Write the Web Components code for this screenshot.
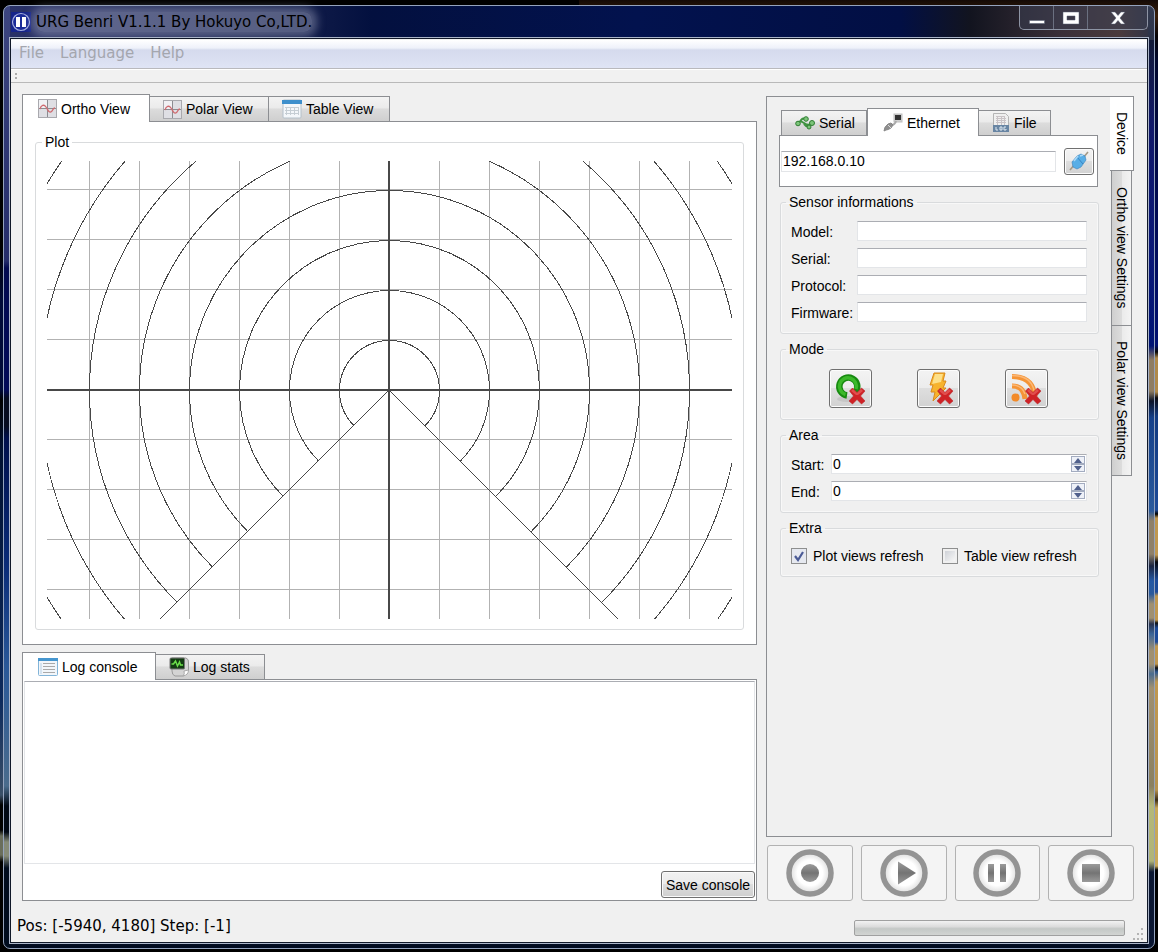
<!DOCTYPE html>
<html lang="en">
<head>
<meta charset="utf-8">
<title>URG Benri</title>
<style>
html,body{margin:0;padding:0}
body{
  min-height:100vh;display:flex;font:14px/18px "Liberation Sans",Arial,sans-serif;color:#000;
  background:
    linear-gradient(180deg,#000 0,#000 250px,#000a38 300px,#000a38 390px,#000 400px,#001030 450px,#0d2a5c 700px,#3a5068 795px,#000 805px,#000 830px,#6a6e5c 836px,#6a6e5c 855px,#000 862px) left/50% 100% no-repeat,
    linear-gradient(180deg,#140a06 0,#3a1f08 16px,#060304 36px,#00072c 60px,#000a50 200px,#001070 345px,#060606 352px,#b08a4a 358px,#b08a4a 392px,#0a0a10 398px,#123a80 416px,#1c4a98 510px,#000 514px,#c09850 518px,#c09850 555px,#05060c 562px,#1c4a98 580px,#1c4a98 592px,#c09850 596px,#c09850 620px,#111 623px,#1c4a98 628px,#1c4a98 642px,#c09850 646px,#c09850 664px,#111 668px,#2a5690 672px,#c09850 682px,#b89450 790px,#3a2c14 800px,#c8a858 808px,#c8a858 866px,#000 870px) right/50% 100% no-repeat;
}
</style>
</head>
<body>
<benri-window caption="URG Benri V1.1.1 By Hokuyo Co,LTD.">
  <benri-menu slot="menu"></benri-menu>
  <benri-main slot="main"></benri-main>
  <benri-status slot="status"></benri-status>
</benri-window>

<script>
const BASE = `<style>
:host,*{box-sizing:border-box}
button,input,textarea{font:inherit;color:inherit;margin:0;padding:0;outline:none}
svg{display:block}
</style>`;

function define(name, html, setup) {
  const tpl = document.createElement('template');
  tpl.innerHTML = BASE + html;
  customElements.define(name, class extends HTMLElement {
    constructor() {
      super();
      this.attachShadow({ mode: 'open' }).append(tpl.content.cloneNode(true));
    }
    connectedCallback() { if (setup && !this.ready) { this.ready = true; setup(this, this.shadowRoot); } }
  });
}

const CROSS = `<path d="M17.500 20l3-3 4.500 4.500 4.500-4.500 3.500 3-4.500 5 4.500 5-3.500 3-4.500-4.500-4.500 4.500-3.500-3 4.500-5z" fill="#cf2226" stroke="#b8262a" stroke-width=".6"/><path d="M19 20l2-2 4 4 4-4 2 2-5 4h-2z" fill="#e8605c" opacity=".7"/>`;
const RING = `<circle cx="24" cy="24" r="21" fill="url(#w)" stroke="#949494" stroke-width="5.500"/>`;
const RDEF = `<defs><radialGradient id="w"><stop offset=".6" stop-color="#fff"/><stop offset="1" stop-color="#d8d8d8"/></radialGradient><linearGradient id="g" x2="0" y2="1"><stop offset="0" stop-color="#9c9c9c"/><stop offset=".5" stop-color="#747474"/><stop offset="1" stop-color="#9a9a9a"/></linearGradient></defs>`;
const ICONS = {
  app: [20, 20, `<rect width="20" height="20" fill="#16248a"/><circle cx="10" cy="10" r="8.500" fill="#1a2a98" stroke="#a6b0e0" stroke-width="1.200"/><path d="M5 5h4v10H5zM11 5h4v10h-4z" fill="#fff"/>`],
  plot: [19, 19, `<rect x=".5" y=".5" width="18" height="18" fill="#dfdfe4" stroke="#a9a9ae"/><path d="M1 1h8v8H1z" fill="#f1f1f4"/><path d="M9.500 1v17M1 9.500h17" stroke="#8c8c91"/><path d="M2 10c1-4 4-5 6-2s3 7 6 4c1-1 1-3 3-3" fill="none" stroke="#cf6a70" stroke-width="1.300"/>`],
  table: [20, 20, `<rect x="1" y="1" width="18" height="18" rx="1" fill="#f4f7fa" stroke="#b4c0ca"/><path d="M0 1h20v4H0z" fill="#3d8fcc"/><path d="M3 8.500h14M3 11.500h14M3 14.500h14M4.500 8v8M8.500 8v8M12.500 8v8M16.500 8v8" stroke="#c6ced4"/>`],
  log: [20, 18, `<rect x=".5" y=".5" width="19" height="17" rx="1" fill="#f2f6fa" stroke="#82b4d8"/><path d="M0 0h20v3H0z" fill="#4596cf"/><path d="M5 5.500h12M5 8.500h12M5 11.500h12M5 14.500h12" stroke="#a9a9a9"/><path d="M3 5v11" stroke="#b8d0e4"/>`],
  stats: [20, 20, `<path d="M3 1h14q3 1 2.500 5v7l-5 6H6q-3-1-3-5z" fill="#d4d4d4" stroke="#9a9a9a"/><path d="M14 19q2-2 1-5l4.500-1q0 5-5.500 6z" fill="#fff" stroke="#aaa"/><rect x="1" y="1" width="14.500" height="11" rx="1" fill="#123c12" stroke="#777"/><path d="M2.500 7h2l2-3 2 5 2-4 1 3h2.500" fill="none" stroke="#6be04a" stroke-width="1.500"/>`],
  serial: [20, 14, `<g fill="none" stroke="#3f9440" stroke-width="2"><path d="M2 7Q5 4 9 7t8 1"/><path d="M5 6Q7 1 11 3"/><path d="M9 8q2 3 5 2"/></g><g fill="#7cc47a" stroke="#2f7d32"><circle cx="3" cy="7.500" r="2.300"/><circle cx="11" cy="3" r="2.300"/><circle cx="17" cy="7" r="2.500"/><circle cx="14" cy="11" r="2"/></g>`],
  ether: [20, 20, `<rect x="11" y="1" width="8" height="8" fill="#cfcfcf" stroke="#c0c0c0"/><path d="M12 2h6v5h-6z" fill="#333"/><path d="M13 8Q12 12 8 12" fill="none" stroke="#aaa" stroke-width="2"/><path d="M1 18q0-4 4-7l3-1 2 2-2 3q-3 2-5 2z" fill="#8f8f8f" stroke="#888"/><path d="M5 12l3 3" stroke="#ddd"/>`],
  file: [18, 20, `<path d="M1.500.500h12l3 3v15h-15z" fill="#efefef" stroke="#b5b5b5"/><path d="M4 3.500h9M4 5.500h10M4 7.500h10M4 9.500h10M5.500 3v9M9.500 3v9M12.500 3v9" stroke="#c9c3c6"/><path d="M1 12h16v7H1z" fill="#6885a3"/><path d="M4 14v3h2M8 14h2v3H8zM14 14h-2v3h2v-1" stroke="#dfe8f0" fill="none"/>`],
  plug: [20, 20, `<path d="M1 19l5-6M14 7l5-6" stroke="#a59a86" stroke-width="1.600"/><path d="M3 11l5-6 4-2 4 2 1 4-5 7-4 2-4-2z" fill="#58aee6" stroke="#3c82bb" stroke-width=".6"/><path d="M8 6l6 7" stroke="#3a84c0" stroke-width="1"/><path d="M5 10l4-5M11 5l3-1" stroke="#aad8f6" stroke-width="1.500"/>`],
  loop: [36, 36, `<ellipse cx="15" cy="28" rx="10" ry="3" fill="#bbb" opacity=".6"/><path d="M15 24.500A9 9 0 1 1 23.500 21" fill="none" stroke="#178a10" stroke-width="6.500"/><path d="M13.500 23.500A8.500 8.500 0 1 1 24 18" fill="none" stroke="#3bb82a" stroke-width="3.500"/>` + CROSS],
  bolt: [36, 36, `<path d="M14 2h11l-2 8h3l-3 7h3L13 30l2-9h-4l2-7h-3z" fill="#f7b32e" stroke="#d98a1c"/><path d="M15 3h8l-2 8-9 2z" fill="#fde08a"/>` + CROSS],
  feed: [36, 36, `<g fill="none" stroke="#f59436" stroke-width="5"><path d="M4 15q12 0 13 13"/><path d="M4 5.500q21 0 23 20"/></g><path d="M4 4.500q19 0 22 15M4 14q10 0 13 9" fill="none" stroke="#fbb877" stroke-width="1.500"/><circle cx="7.500" cy="26.500" r="4" fill="#f28a28"/>` + CROSS],
  record: [48, 48, RDEF + RING + `<circle cx="24" cy="24" r="9" fill="url(#g)"/>`],
  play: [48, 48, RDEF + RING + `<path d="M18 12.500v23L36 24z" fill="url(#g)"/>`],
  pause: [48, 48, RDEF + RING + `<path d="M15 15h6v18h-6zM27 15h6v18h-6z" fill="url(#g)"/>`],
  stop: [48, 48, RDEF + RING + `<path d="M15 15h18v18H15z" fill="url(#g)"/>`],
  min: [16, 14, `<path d="M.500 9.500h15v3H.500z" fill="#fff" stroke="#555c70" stroke-width=".5"/>`],
  max: [18, 14, `<path fill-rule="evenodd" d="M1 1h16v12H1zM5 5v4h8V5z" fill="#fff" stroke="#555c70" stroke-width=".5"/>`],
  close: [16, 14, `<path d="M1 1h4l3 3.500L11 1h4L10 7l5 6h-4L8 9.500 5 13H1l5-6z" fill="#fff" stroke="#555c70" stroke-width=".5"/>`],
  up: [8, 5, `<path d="M4 0l4 5H0z" fill="#50608c"/>`],
  down: [8, 5, `<path d="M4 5l4-5H0z" fill="#50608c"/>`]
};

define('benri-icon', `<style>:host{display:block;flex:none}</style>`, (el, root) => {
  const [w, h, body] = ICONS[el.getAttribute('name')];
  root.append(document.createRange().createContextualFragment(
    `<svg width="${w}" height="${h}" viewBox="0 0 ${w} ${h}" aria-hidden="true">${body}</svg>`));
});

define('benri-window', `<style>
:host{display:flex;flex:1;min-width:0;margin:5px 3px 3px 3px}
.frame{flex:1;min-width:0;display:flex;flex-direction:column;border:1px solid #94a3bd;border-radius:7px;padding:0 6px 5px;
 background:
 linear-gradient(180deg,#333b50 0,#2c3348 34px,transparent 34px) right/6px 100% no-repeat,
 linear-gradient(180deg,#3d4680 0,#252d6a 255px,#020a50 262px,#020a58 384px,#060c20 392px,#060c20 420px,#00104c 432px,#0a2c78 560px,#2a5898 660px,#4a6c8c 780px,#000814 800px,#000814 826px,#868b78 836px,#868b78 850px,#000c1e 862px) left/6px 100% no-repeat,
 linear-gradient(180deg,transparent 34px,#121a38 34px,#10186a 120px,#0a1878 250px,#001474 340px,#8f7d62 354px,#8f7d62 385px,#0c1428 395px,#15408a 412px,#2a5a9c 505px,#8f8068 515px,#8f8068 548px,#1a2440 560px,#2458a4 575px,#2a5a9c 588px,#a09070 598px,#a09070 612px,#2a3450 618px,#3a6498 628px,#a09070 645px,#a09070 658px,#4a6c90 668px,#a09070 682px,#8a8060 780px,#b4b878 800px,#b0b478 855px,#0a1632 866px) right/6px 100% no-repeat,
 linear-gradient(90deg,#2a3268 0,#1a2450 22%,#03103f 32%,#02124e 55%,#020f44 78%,#12141f 84%,#3a2f38 92%,#4a3a3c 97%,#2e3448 100%) top/100% 34px no-repeat,
 #010b20}
header{display:flex;align-items:flex-start;height:32px;flex:none}
.cap{display:flex;align-items:center;gap:5px;height:31px;padding-left:1px;flex:1}
h1{margin:0;font:15px/20px "DejaVu Sans",Verdana,sans-serif;color:#000;background:rgba(150,156,184,.5);box-shadow:0 0 8px 5px rgba(150,156,184,.5);border-radius:8px;white-space:nowrap}
.btns{display:flex;border:1px solid #8d94a4;border-top:0;border-radius:0 0 5px 5px;height:24px;flex:none;background:rgba(60,66,86,.5)}
.btns button{border:0;background:none;display:flex;align-items:center;justify-content:center;width:34px;border-right:1px solid #6b7080}
.btns button:last-child{width:59px;border-right:0}
.client{flex:1;min-height:0;display:flex;flex-direction:column;border:1px solid #101828;background:#f0f0f0;outline:1px solid #aab4c8;padding:1px 0 0}
slot[name=main]::slotted(*){flex:1}
</style>
<div class="frame"><header><div class="cap"><benri-icon name="app"></benri-icon><h1></h1></div>
<div class="btns"><button aria-label="Minimize"><benri-icon name="min"></benri-icon></button><button aria-label="Maximize"><benri-icon name="max"></benri-icon></button><button aria-label="Close"><benri-icon name="close"></benri-icon></button></div></header>
<div class="client"><slot name="menu"></slot><slot name="main"></slot><slot name="status"></slot></div></div>`,
(el, root) => { root.querySelector('h1').textContent = el.getAttribute('caption'); });

define('benri-menu', `<style>
:host{display:block;font:15px/20px "DejaVu Sans",Verdana,sans-serif}
nav{display:flex;gap:16px;height:29px;padding:3px 8px 0;border-bottom:1px solid #b9b9bd;background:linear-gradient(#fff 0,#eef1fa 8px,#d5daed 10px,#dfe4f5 100%)}
button{border:0;background:none;color:#a4a6ae;height:20px;line-height:20px}
.bar{height:14px;border-top:1px solid #fff;border-bottom:1px solid #b9b9b9;background:#f1f1f1;display:flex;align-items:center;padding-left:4px}
.bar i{width:2px;height:6px;border:solid #aaa;border-width:2px 0}
</style><nav><button>File</button><button>Language</button><button>Help</button></nav><div class="bar"><i></i></div>`);

define('benri-tab', `<style>
:host{display:block;flex:none}
button{width:100%;height:25px;display:flex;align-items:center;gap:4px;padding:0 0 0 13px;border:1px solid #8c8e92;border-bottom:0;border-left-width:0;white-space:nowrap;background:linear-gradient(#f3f3f3 0,#ebebeb 45%,#dcdcdc 50%,#cfcfcf 100%)}
:host(:first-child) button{border-left-width:1px}
:host([active]) button{height:28px;margin-bottom:-1px;background:#fff;position:relative;border-left-width:1px;padding-left:15px}
</style><button role="tab"><slot name="icon"></slot><slot></slot></button>`,
(el, root) => root.querySelector('button').setAttribute('aria-selected', el.hasAttribute('active')));

define('benri-group', `<style>
:host{display:flex;min-width:0}
fieldset{flex:1;min-width:0;margin:0;border:1px solid #d9dbdd;border-radius:3px;padding:10px 11px 11px 10px;box-shadow:inset 0 0 0 1px var(--hi,#f8f8f8)}
legend{padding:0 3px;margin-left:-5px;line-height:18px}
:host([fill]) fieldset{display:flex;padding:10px 11px}
</style><fieldset><legend></legend><slot></slot></fieldset>`,
(el, root) => { root.querySelector('legend').textContent = el.getAttribute('title-text'); });

define('benri-plot', `<style>:host{display:block;flex:1;min-width:0;min-height:0}svg{width:100%;height:100%}</style>
<svg viewBox="0 0 685 458" preserveAspectRatio="xMidYMid slice" shape-rendering="crispEdges" fill="none" role="img" aria-label="Plot"></svg>`,
(el, root) => {
  const cx = 342, cy = 229;
  let grid = '', arcs = '';
  for (let i = -6; i <= 6; i++) if (i) grid += `M${cx + i * 50 + .5} 0V458`;
  for (let i = -4; i <= 4; i++) if (i) grid += `M0 ${cy + i * 50 - .5}H685`;
  for (let n = 1; n <= 8; n++) {
    const r = n * 50, d = r * Math.SQRT1_2, x = cx + .5, y = cy + .5;
    arcs += `M${x - d} ${y + d}A${r} ${r} 0 1 1 ${x + d} ${y + d}`;
  }
  root.querySelector('svg').innerHTML =
    `<path d="${grid}" stroke="#000" stroke-opacity=".3"/><path d="${arcs}" stroke="#484848"/>
     <path d="M${cx} ${cy}l240 240M${cx} ${cy}l-240 240" stroke="#484848"/>
     <path d="M${cx} 0V458M0 ${cy}H685" stroke="#484848" stroke-width="2"/>`;
});

define('benri-views', `<style>
:host{display:flex;flex-direction:column;flex:1;min-height:0}
.tabs{display:flex;align-items:flex-end;height:27px}
.pane{flex:1;min-height:0;display:flex;background:#fff;border:1px solid #8c8e92;padding:11px 12px 14px}
benri-group{flex:1;--hi:#fff}
.a{width:128px}.b{width:119px}.c{width:121px}
</style><div class="tabs" role="tablist">
<benri-tab class="a" active><benri-icon slot="icon" name="plot"></benri-icon>Ortho View</benri-tab>
<benri-tab class="b"><benri-icon slot="icon" name="plot"></benri-icon>Polar View</benri-tab>
<benri-tab class="c"><benri-icon slot="icon" name="table"></benri-icon>Table View</benri-tab></div>
<div class="pane"><benri-group title-text="Plot" fill><benri-plot></benri-plot></benri-group></div>`);

define('benri-log', `<style>
:host{display:flex;flex-direction:column;height:249px;flex:none}
.tabs{display:flex;align-items:flex-end;height:27px}
.pane{flex:1;display:flex;flex-direction:column;background:#fff;border:1px solid #8c8e92;padding:1px 1px 2px}
textarea{flex:1;width:100%;resize:none;border:1px solid #e3e5e8;border-top-color:#abadb3;background:#fff}
.save{align-self:flex-end;margin-top:7px;width:94px;height:27px;border:1px solid #707070;border-radius:3px;box-shadow:inset 0 0 0 1px #fafafa;background:linear-gradient(#f2f2f2 0,#ebebeb 48%,#dddddd 50%,#cfcfcf 100%);white-space:nowrap;padding:0 3px}
.a{width:134px}.b{width:109px}
</style><div class="tabs" role="tablist">
<benri-tab class="a" active><benri-icon slot="icon" name="log"></benri-icon>Log console</benri-tab>
<benri-tab class="b"><benri-icon slot="icon" name="stats"></benri-icon>Log stats</benri-tab></div>
<div class="pane"><textarea readonly aria-label="Log console"></textarea><button class="save">Save console</button></div>`);

define('benri-spin', `<style>
:host{display:block}
div{display:flex;align-items:center;height:20px;background:#fff;border:1px solid #e3e5e8;border-top-color:#abadb3;padding:0 1px}
input{flex:1;min-width:0;border:0;background:none;appearance:textfield;height:18px}
input::-webkit-inner-spin-button{display:none}
span{display:flex;flex-direction:column;width:14px;flex:none}
button{height:8px;border:1px solid #a3acc0;background:#eef1f8;display:flex;align-items:center;justify-content:center}
</style><div><input type="number" value="0"><span><button aria-label="Increase" tabindex="-1"><benri-icon name="up"></benri-icon></button><button aria-label="Decrease" tabindex="-1"><benri-icon name="down"></benri-icon></button></span></div>`,
(el, root) => {
  const input = root.querySelector('input'), [up, down] = root.querySelectorAll('button');
  input.setAttribute('aria-label', el.getAttribute('label'));
  up.onclick = () => input.stepUp();
  down.onclick = () => input.stepDown();
});

define('benri-device', `<style>
:host{display:flex;flex-direction:column;flex:1;min-width:0;border:1px solid #8c8e92;padding:11px 12px}
.tabs{display:flex;align-items:flex-end;height:27px;padding-left:2px}
.pane{height:52px;margin-right:1px;display:flex;align-items:center;gap:8px;background:#fff;border:1px solid #8c8e92;padding:0 3px 0 1px}
input.t{min-width:0;height:21px;border:1px solid #e3e5e8;border-top-color:#abadb3;background:#fff;padding:0 1px}
.pane input{flex:1}
.b{border:1px solid #707070;border-radius:3px;box-shadow:inset 0 0 0 1px #fcfcfc;background:linear-gradient(#f3f3f3 0,#ececec 48%,#dedede 50%,#d2d2d2 100%);display:flex;align-items:center;justify-content:center}
.plug{width:30px;height:27px}
.groups{display:flex;flex-direction:column;gap:6px;padding:6px 0 0 1px}
.form{display:grid;grid-template-columns:66px minmax(0,1fr);row-gap:7px}
.form input.t{height:20px}
.form label{height:20px;line-height:22px}
.form.area{grid-template-columns:40px minmax(0,1fr)}
.mode{display:flex;justify-content:center;gap:45px;height:40px;padding:1px 2px 0 0}
.mode .b{width:43px;height:39px}
.extra{display:grid;grid-template-columns:151px minmax(0,1fr)}
.extra label{display:flex;align-items:center;gap:6px;height:18px;white-space:nowrap}
.extra input{appearance:none;width:16px;height:16px;border:1px solid #8e8f8f;background:linear-gradient(135deg,#cfd2d8,#f6f6f6) content-box #f4f4f4;padding:2px;display:grid;flex:none}
.extra input:checked{background:no-repeat center/12px 12px url("data:image/svg+xml,%3Csvg xmlns='http://www.w3.org/2000/svg' viewBox='0 0 12 12'%3E%3Cpath d='M2 6l3 4 5-8' fill='none' stroke='%234b5b96' stroke-width='2.200'/%3E%3C/svg%3E") #e6e9f0}
.x{width:86px}.y{width:112px}.z{width:72px}
</style><div class="tabs" role="tablist">
<benri-tab class="x"><benri-icon slot="icon" name="serial"></benri-icon>Serial</benri-tab>
<benri-tab class="y" active><benri-icon slot="icon" name="ether"></benri-icon>Ethernet</benri-tab>
<benri-tab class="z"><benri-icon slot="icon" name="file"></benri-icon>File</benri-tab></div>
<div class="pane"><input class="t" type="text" value="192.168.0.10" aria-label="IP address"><button class="b plug" aria-label="Connect"><benri-icon name="plug"></benri-icon></button></div>
<div class="groups">
<benri-group title-text="Sensor informations"><div class="form">
<label for="m">Model:</label><input class="t" id="m"><label for="s">Serial:</label><input class="t" id="s"><label for="p">Protocol:</label><input class="t" id="p"><label for="f">Firmware:</label><input class="t" id="f"></div></benri-group>
<benri-group title-text="Mode"><div class="mode"><button class="b" aria-label="Continuous"><benri-icon name="loop"></benri-icon></button><button class="b" aria-label="Intensity"><benri-icon name="bolt"></benri-icon></button><button class="b" aria-label="Multi echo"><benri-icon name="feed"></benri-icon></button></div></benri-group>
<benri-group title-text="Area"><div class="form area"><label>Start:</label><benri-spin label="Start"></benri-spin><label>End:</label><benri-spin label="End"></benri-spin></div></benri-group>
<benri-group title-text="Extra"><div class="extra"><label><input type="checkbox" checked>Plot views refresh</label><label><input type="checkbox">Table view refresh</label></div></benri-group>
</div>`);

define('benri-side', `<style>
:host{display:flex;flex-direction:column;gap:8px;min-width:0;padding-top:2px}
.top{flex:1;display:flex;min-height:0}
.vt{display:flex;flex-direction:column;width:24px;margin-left:-2px;flex:none}
.vt button{writing-mode:vertical-rl;margin-left:2px;width:20px;border:1px solid #8c8e92;border-left:0;border-top:0;white-space:nowrap;background:linear-gradient(90deg,#cfcfcf,#dcdcdc 50%,#ebebeb 55%,#f3f3f3);display:flex;align-items:center;justify-content:center}
.vt .on{margin-left:0;width:24px;height:75px;border-top:1px solid #8c8e92;background:#fff;position:relative}
.o{height:155px}.p{height:150px}
.ctl{display:grid;grid-template-columns:repeat(4,minmax(0,1fr));gap:8px;padding-left:1px}
.ctl button{height:56px;border:1px solid #b2b2b2;border-radius:3px;background:#f4f4f4;display:flex;align-items:center;justify-content:center}
</style><div class="top"><benri-device></benri-device><div class="vt" role="tablist"><button class="on" role="tab">Device</button><button class="o" role="tab">Ortho view Settings</button><button class="p" role="tab">Polar view Settings</button></div></div>
<div class="ctl"><button aria-label="Record"><benri-icon name="record"></benri-icon></button><button aria-label="Play"><benri-icon name="play"></benri-icon></button><button aria-label="Pause"><benri-icon name="pause"></benri-icon></button><button aria-label="Stop"><benri-icon name="stop"></benri-icon></button></div>`);

define('benri-main', `<style>
:host{display:grid;grid-template-columns:minmax(0,1fr) 368px;gap:9px;padding:11px 13px 0 11px;min-height:0}
.left{display:flex;flex-direction:column;gap:7px;min-height:0}
</style><div class="left"><benri-views></benri-views><benri-log></benri-log></div><benri-side></benri-side>`);

define('benri-status', `<style>
:host{display:flex;align-items:center;justify-content:space-between;height:41px;padding:8px 4px 0 6px;font:15px/20px "DejaVu Sans",Verdana,sans-serif;flex:none}
.r{display:flex;align-self:flex-end;align-items:flex-end;gap:8px;padding-bottom:2px}
.bar{width:271px;height:16px;border:1px solid #a0a0a0;border-radius:2px;background:linear-gradient(#f2f2f2,#dcdcdc 40%,#c4c8c6 55%,#d2d4d2);margin-bottom:4px}
</style><span>Pos: [-5940, 4180] Step: [-1]</span><div class="r"><div class="bar" role="progressbar" aria-label="Progress"></div>
<svg width="10" height="12" viewBox="0 0 10 12" fill="#b4b4b4" aria-hidden="true"><path d="M8 0h2v2H8zM8 5h2v2H8zM8 10h2v2H8zM4 5h2v2H4zM4 10h2v2H4zM0 10h2v2H0z"/></svg></div>`);
</script>
</body>
</html>
